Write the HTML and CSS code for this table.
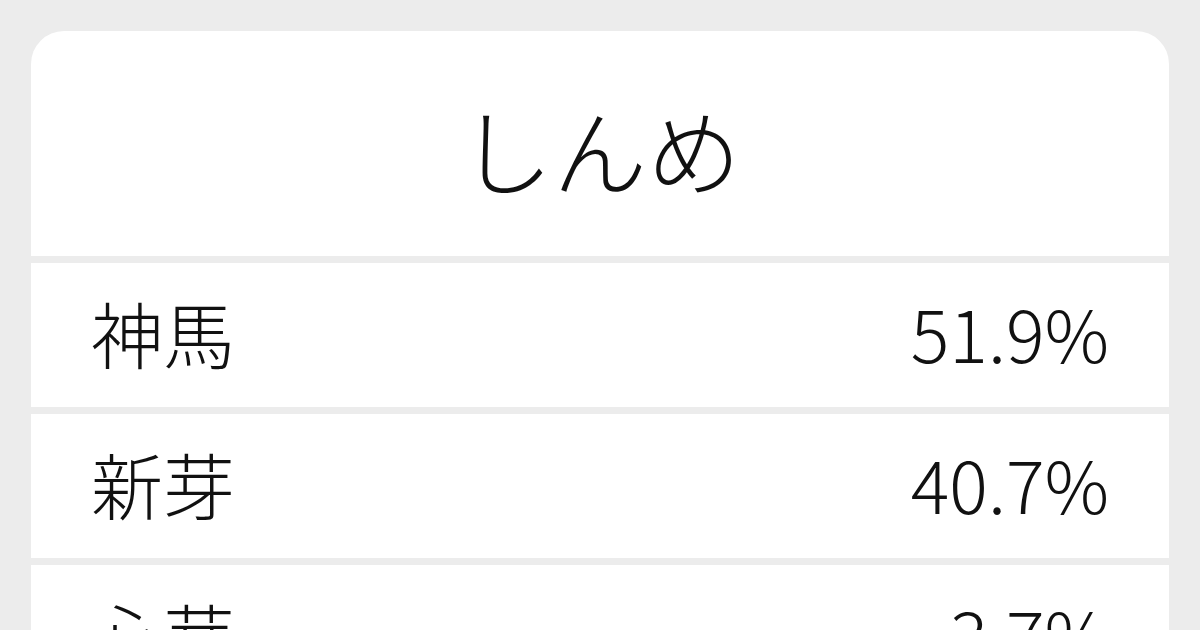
FILE: index.html
```html
<!DOCTYPE html>
<html lang="ja">
<head>
<meta charset="utf-8">
<title>しんめ</title>
<link rel="stylesheet" href="styles.css">
</head>
<body>
<main class="card">
  <header class="title">しんめ</header>
  <div class="row"><span class="word">神馬</span><span class="pct">51.9%</span></div>
  <div class="row"><span class="word">新芽</span><span class="pct">40.7%</span></div>
  <div class="row"><span class="word">心芽</span><span class="pct">3.7%</span></div>
</main>
</body>
</html>
```

FILE: styles.css
```css
html, body {
  margin: 0;
  padding: 0;
  background: #ececec;
}
body {
  width: 1200px;
  height: 630px;
  overflow: hidden;
  padding: 31px 31px 0 31px;
  box-sizing: border-box;
  font-family: "Noto Sans CJK JP", "Noto Sans", sans-serif;
  font-weight: 300;
  color: #111;
}
.card {
  display: flex;
  flex-direction: column;
  gap: 7px;
  border-radius: 33px 33px 0 0;
  overflow: hidden;
}
.title {
  background: #fff;
  height: 225px;
  display: flex;
  align-items: center;
  justify-content: center;
  font-size: 94px;
  line-height: 1;
  padding-top: 8px;
  box-sizing: border-box;
}
.row {
  background: #fff;
  height: 144px;
  flex: none;
  display: flex;
  align-items: center;
  justify-content: space-between;
  padding: 0 60px 6px 60px;
  box-sizing: border-box;
  font-size: 72px;
  line-height: 1;
}
```
